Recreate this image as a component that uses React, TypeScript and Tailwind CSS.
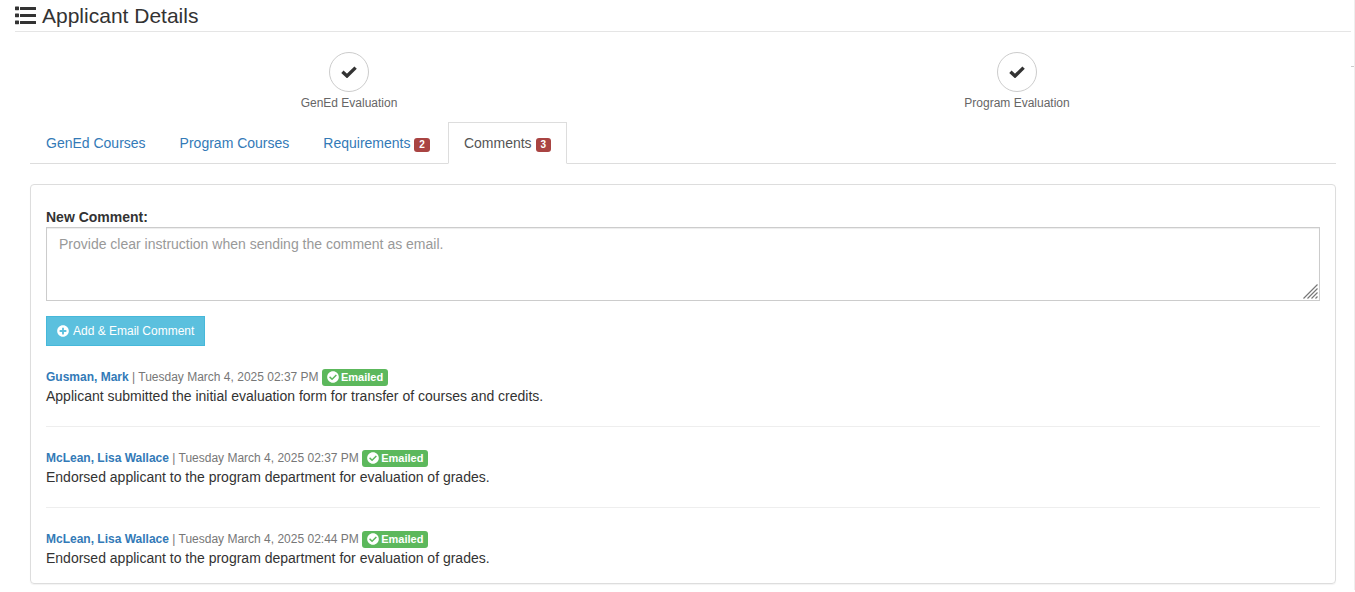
import { FaCheckCircle, FaPlusCircle } from 'react-icons/fa';

interface Comment {
  id: number;
  author: string;
  date: string;
  text: string;
}

const steps = ['GenEd Evaluation', 'Program Evaluation'];

const tabs = [
  { label: 'GenEd Courses' },
  { label: 'Program Courses' },
  { label: 'Requirements', count: 2 },
  { label: 'Comments', count: 3, active: true },
];

const comments: Comment[] = [
  {
    id: 1,
    author: 'Gusman, Mark',
    date: 'Tuesday March 4, 2025 02:37 PM',
    text: 'Applicant submitted the initial evaluation form for transfer of courses and credits.',
  },
  {
    id: 2,
    author: 'McLean, Lisa Wallace',
    date: 'Tuesday March 4, 2025 02:37 PM',
    text: 'Endorsed applicant to the program department for evaluation of grades.',
  },
  {
    id: 3,
    author: 'McLean, Lisa Wallace',
    date: 'Tuesday March 4, 2025 02:44 PM',
    text: 'Endorsed applicant to the program department for evaluation of grades.',
  },
];

function ListIcon() {
  return (
    <svg width="21" height="19" viewBox="0 0 21 19" fill="currentColor" aria-hidden="true">
      <rect x="0" y="0.5" width="4" height="3.7" rx="0.4" />
      <rect x="5" y="1" width="16" height="3" rx="0.3" />
      <rect x="0" y="7.5" width="4" height="3.7" rx="0.4" />
      <rect x="5" y="8" width="16" height="3" rx="0.3" />
      <rect x="0" y="14.5" width="4" height="3.7" rx="0.4" />
      <rect x="5" y="15" width="16" height="3" rx="0.3" />
    </svg>
  );
}

function Step({ label }: { label: string }) {
  return (
    <li className="flex flex-1 flex-col items-center">
      <span className="flex size-10 items-center justify-center rounded-full border border-[#ccc]">
        <svg width="16" height="12" viewBox="0 0 16 12" aria-hidden="true">
          <path d="M1.4 5.8 6 10 14.6 1.6" fill="none" stroke="currentColor" strokeWidth="3.4" />
        </svg>
      </span>
      <span className="mt-0.5 text-xs leading-[18px] text-[#666]">{label}</span>
    </li>
  );
}

function Tabs() {
  return (
    <nav className="flex gap-0.5 border-b border-[#ddd]">
      {tabs.map((tab) => (
        <a
          key={tab.label}
          href="#"
          aria-current={tab.active ? 'page' : undefined}
          className={
            tab.active
              ? '-mb-px border border-[#ddd] border-b-white bg-white px-[15px] py-2.5 text-[#555]'
              : '-mb-px border border-transparent border-b-[#ddd] px-[15px] py-2.5 text-[#337ab7]'
          }
        >
          {tab.label}
          {tab.count && (
            <>
              {' '}
              <span className="inline-block rounded-[3px] bg-[#a94442] px-[5px] text-[10px] leading-[14px] font-bold text-white">
                {tab.count}
              </span>
            </>
          )}
        </a>
      ))}
    </nav>
  );
}

function CommentItem({ comment }: { comment: Comment }) {
  return (
    <li className="border-b border-[#eee] pb-5 last:border-b-0 last:pb-0">
      <div className="flex h-5 items-center pt-0.5 text-xs text-[#777]">
        <span className="whitespace-pre">
          <strong className="text-[#337ab7]">{comment.author}</strong> | {comment.date}{' '}
        </span>
        <span className="flex items-center gap-0.5 rounded-[3px] bg-[#5cb85c] px-[5px] text-[11px] leading-[17px] font-bold text-white">
          <FaCheckCircle size={12} />
          Emailed
        </span>
      </div>
      <p>{comment.text}</p>
    </li>
  );
}

export default function App() {
  return (
    <div className="relative border-r border-[#eee] bg-white pr-[3px] pb-1.5 pl-[15px] font-['Liberation_Sans',Arial,sans-serif] text-sm leading-5 text-[#333]">
      <span className="absolute top-[66px] right-0 h-px w-[3px] bg-[#ccc]" />
      <h1 className="flex items-center gap-1.5 border-b border-[#e5e5e5] text-[21px] leading-[31px]">
        <ListIcon />
        Applicant Details
      </h1>

      <ol className="flex pt-5">
        {steps.map((step) => (
          <Step key={step} label={step} />
        ))}
      </ol>

      <main className="px-[15px] pt-2.5">
        <Tabs />

        <section className="mt-5 rounded border border-[#ddd] px-[15px] pt-[22px] pb-[15px] shadow-[0_1px_1px_rgba(0,0,0,0.05)]">
          <label htmlFor="comment" className="block font-bold">
            New Comment:
          </label>
          <div className="relative">
            <textarea
              id="comment"
              rows={3}
              placeholder="Provide clear instruction when sending the comment as email."
              className="block w-full resize-none border border-[#ccc] px-3 py-1.5 shadow-[inset_0_1px_1px_rgba(0,0,0,0.075)] placeholder:text-[#999]"
            />
            <svg
              width="15"
              height="15"
              viewBox="0 0 15 15"
              className="pointer-events-none absolute right-0.5 bottom-0.5"
              aria-hidden="true"
            >
              <path
                d="M0.5 14.5 14.5 0.5M4.5 14.5 14.5 4.5M8.5 14.5 14.5 8.5M12.5 14.5 14.5 12.5"
                stroke="#777"
                strokeWidth="1.2"
              />
            </svg>
          </div>
          <button
            type="button"
            className="mt-[15px] flex items-center gap-1 border border-[#46b8da] bg-[#5bc0de] px-2.5 py-[5px] text-xs leading-[18px] text-white"
          >
            <FaPlusCircle size={12} />
            Add &amp; Email Comment
          </button>

          <ul className="mt-5 space-y-5">
            {comments.map((comment) => (
              <CommentItem key={comment.id} comment={comment} />
            ))}
          </ul>
        </section>
      </main>
    </div>
  );
}
